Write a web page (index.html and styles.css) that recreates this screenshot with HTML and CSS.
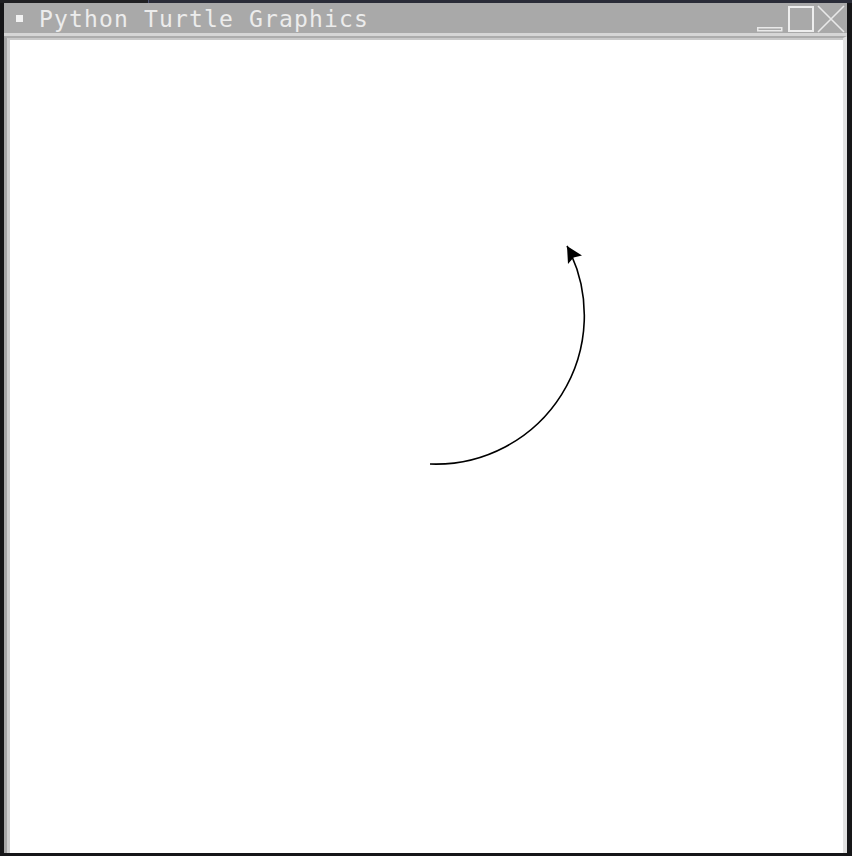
FILE: index.html
```html
<!DOCTYPE html>
<html>
<head>
<meta charset="utf-8">
<title>Python Turtle Graphics</title>
<link rel="stylesheet" href="styles.css">
</head>
<body>
<div class="desk-top"><span class="strip-a"></span><span class="strip-b"></span></div>
<div class="frame">
  <div class="titlebar">
    <span class="menu-square"></span>
    <span class="title">Python Turtle Graphics</span>
    <svg class="buttons" width="92" height="30" viewBox="0 0 92 30">
      <rect x="2.75" y="24.75" width="24" height="3" fill="none" stroke="#e9e9e9" stroke-width="1.5"/>
      <rect x="34" y="4" width="24" height="24" fill="none" stroke="#eeeeee" stroke-width="2"/>
      <path d="M63 3 L89 29 M89 3 L63 29" stroke="#e9e9e9" stroke-width="1.6" fill="none"/>
    </svg>
  </div>
  <div class="sep"></div>
  <div class="client">
    <div class="canvas">
      <svg class="drawing" width="833" height="813" viewBox="10 40 833 813">
        <path d="M430 464 A148.5 148.5 0 0 0 567 246" fill="none" stroke="#000" stroke-width="1.6"/>
        <polygon points="567,246 582,255.6 573.6,257.4 568,264" fill="#000"/>
      </svg>
    </div>
  </div>
</div>
</body>
</html>
```

FILE: styles.css
```css
html, body {
  margin: 0;
  padding: 0;
}

body {
  width: 852px;
  height: 856px;
  overflow: hidden;
  background: #161618;
}

.desk-top {
  display: flex;
  height: 3px;
}

.strip-a {
  width: 148px;
  background: #202023;
}

.strip-b {
  flex: 1;
  background: #2a2c38;
  border-left: 1px solid #4b5170;
}

.frame {
  margin-left: 4px;
  width: 843px;
  height: 850px;
  display: flex;
  flex-direction: column;
}

.titlebar {
  height: 30px;
  background: #a9a9a9;
  display: flex;
  align-items: center;
  flex-shrink: 0;
}

.menu-square {
  width: 7px;
  height: 7px;
  background: #f2f2f2;
  margin-left: 12px;
  margin-right: 16px;
}

.title {
  font-family: "DejaVu Sans Mono", "Liberation Mono", monospace;
  font-size: 23px;
  letter-spacing: 1.15px;
  line-height: 30px;
  padding-top: 2px;
  color: #ececec;
  white-space: nowrap;
}

.buttons {
  margin-left: auto;
  display: block;
}

.sep {
  height: 3px;
  background: #d6d6d6;
  flex-shrink: 0;
}

.client {
  flex: 1;
  display: flex;
  border-top: 2px solid #acacac;
  border-left: 3px solid #a6a6a6;
  border-right: 4px solid #e2e2e2;
}

.canvas {
  flex: 1;
  background: #ffffff;
  border-top: 2px solid #c9c9c9;
  border-left: 3px solid #cfcfcf;
  overflow: hidden;
}

.drawing {
  display: block;
}
```
